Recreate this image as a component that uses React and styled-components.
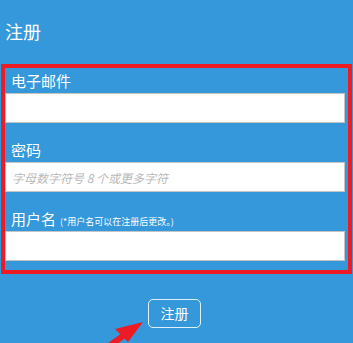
import React from "react";
import styled, { createGlobalStyle } from "styled-components";

const Global = createGlobalStyle`
  html, body { margin: 0; padding: 0; background: #3498db; }
  body { font-family: "Noto Sans CJK SC", "Noto Sans", sans-serif; color: #fff; }
  * { box-sizing: border-box; }
`;

const Page = styled.div`
  position: relative;
  width: 353px;
  height: 343px;
  overflow: hidden;
  background: #3498db;
`;

const Header = styled.div`
  height: 64px;
  display: flex;
  align-items: center;
  padding: 0 0 2px 5px;
  font-size: 18px;
  color: #fff;
`;

const FormBox = styled.div`
  margin: 0 1px;
  border: 4px solid #ed1c24;
  padding: 3px 3px 9px 0;
  display: flex;
  flex-direction: column;
  gap: 17px;
`;

const Field = styled.div`
  display: flex;
  flex-direction: column;
  gap: 2px;
`;

const Label = styled.div`
  height: 20px;
  line-height: 20px;
  font-size: 15px;
  padding-left: 6px;
  color: #fff;
  white-space: nowrap;
`;

const Note = styled.span`
  font-size: 9px;
  margin-left: 4px;
`;

const Input = styled.input`
  display: block;
  width: 100%;
  height: 30px;
  margin: 0;
  border: 1px solid #c4c4c4;
  background: #fff;
  padding: 0 6px;
  font-family: "Noto Sans CJK SC", "Noto Sans", sans-serif;
  font-size: 12px;
  outline: none;
  &::placeholder {
    color: #b9b9b9;
    font-style: italic;
  }
`;

const ButtonRow = styled.div`
  display: flex;
  justify-content: center;
  padding-right: 4px;
  margin-top: 25px;
`;

const Button = styled.button`
  width: 53px;
  height: 29px;
  border: 1px solid rgba(255, 255, 255, 0.85);
  border-radius: 5px;
  background: transparent;
  color: #fff;
  font-family: "Noto Sans CJK SC", "Noto Sans", sans-serif;
  font-size: 14px;
  padding: 0;
  line-height: 27px;
`;

const Arrow = styled.svg`
  position: absolute;
  left: 0;
  top: 0;
  pointer-events: none;
`;

export default function App() {
  return (
    <Page>
      <Global />
      <Header>注册</Header>
      <FormBox>
        <Field>
          <Label>电子邮件</Label>
          <Input type="email" />
        </Field>
        <Field>
          <Label>密码</Label>
          <Input type="password" placeholder="字母数字符号 8 个或更多字符" />
        </Field>
        <Field>
          <Label>
            用户名<Note>(*用户名可以在注册后更改。)</Note>
          </Label>
          <Input type="text" />
        </Field>
      </FormBox>
      <ButtonRow>
        <Button>注册</Button>
      </ButtonRow>
      <Arrow width="353" height="343" viewBox="0 0 353 343">
        <line x1="92" y1="358" x2="126" y2="334" stroke="#ed1c24" strokeWidth="6" />
        <polygon points="143,322 115,329 128,342" fill="#ed1c24" />
      </Arrow>
    </Page>
  );
}
